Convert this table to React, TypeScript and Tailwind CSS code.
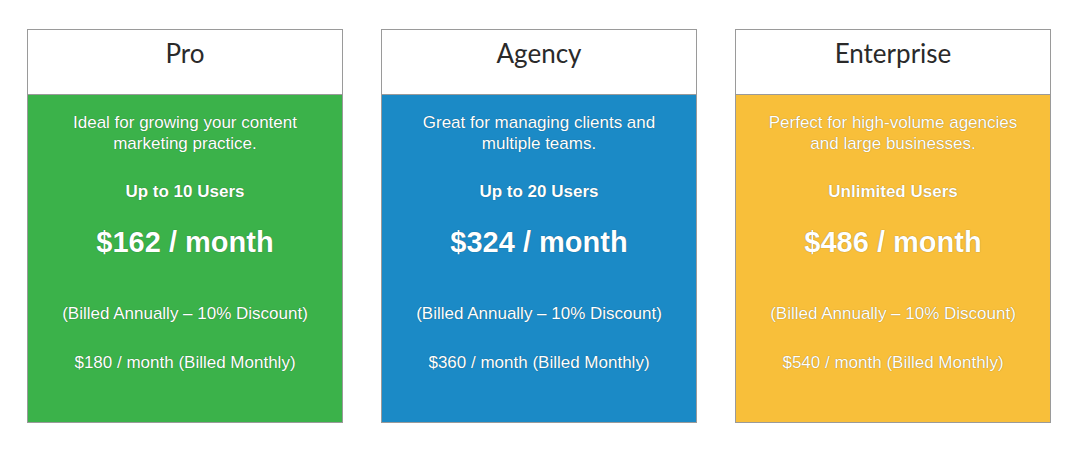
const plans = [
  {
    name: "Pro",
    desc: ["Ideal for growing your content", "marketing practice."],
    users: "Up to 10 Users",
    price: "$162 / month",
    monthly: "$180 / month (Billed Monthly)",
    bg: "bg-[#3bb24a]",
  },
  {
    name: "Agency",
    desc: ["Great for managing clients and", "multiple teams."],
    users: "Up to 20 Users",
    price: "$324 / month",
    monthly: "$360 / month (Billed Monthly)",
    bg: "bg-[#1b8ac6]",
  },
  {
    name: "Enterprise",
    desc: ["Perfect for high-volume agencies", "and large businesses."],
    users: "Unlimited Users",
    price: "$486 / month",
    monthly: "$540 / month (Billed Monthly)",
    bg: "bg-[#f8bf3a]",
  },
];

export default function App() {
  return (
    <div className="w-[1070px] h-[449px] bg-white pl-[27px] pt-[29px]">
      <div className="flex gap-[38px]">
        {plans.map((p) => (
          <div key={p.name} className="w-[316px] h-[394px] flex flex-col border border-[#9a9a9a]">
            <div
              className="h-[65px] flex justify-center bg-white border-b border-[#9a9a9a] text-[26px] leading-[30px] text-[#2a2a2a] pt-[8px]"
              style={{ fontFamily: "Lato, sans-serif" }}
            >
              {p.name}
            </div>
            <div
              className={`flex-1 ${p.bg} text-white text-center [text-shadow:0_0_1px_rgba(0,0,0,0.45)]`}
              style={{ fontFamily: "'Liberation Sans', Arial, sans-serif" }}
            >
              <p className="pt-[17px] text-[17px] leading-[21px]">
                {p.desc[0]}
                <br />
                {p.desc[1]}
              </p>
              <p className="mt-[27px] text-[17px] leading-[21px] font-bold">{p.users}</p>
              <p className="mt-[24px] text-[29px] leading-[32px] font-bold">{p.price}</p>
              <p className="mt-[45px] text-[17px] leading-[21px]">(Billed Annually – 10% Discount)</p>
              <p className="mt-[28px] text-[17px] leading-[21px]">{p.monthly}</p>
            </div>
          </div>
        ))}
      </div>
    </div>
  );
}
